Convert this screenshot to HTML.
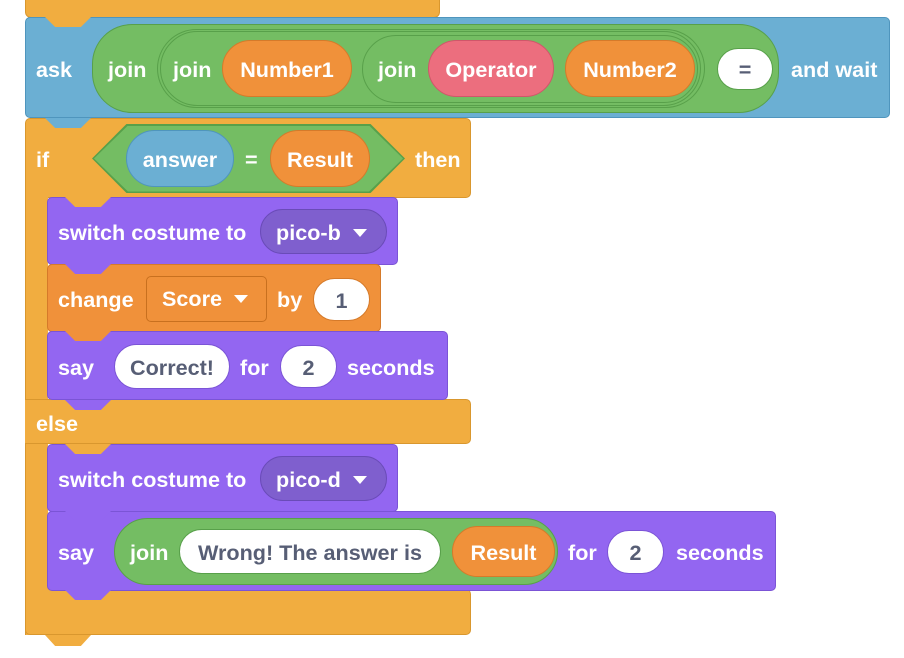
<!DOCTYPE html>
<html><head><meta charset="utf-8"><style>
body{margin:0;width:904px;height:658px;background:#fff;position:relative;overflow:hidden;font-family:"Liberation Sans",Arial,sans-serif;font-weight:bold;font-size:21.6px;color:#fff}
div{position:absolute;box-sizing:border-box}
.t{white-space:nowrap;line-height:24px}
.tab{height:10px;clip-path:polygon(0 0,100% 0,78% 100%,22% 100%)}
.pill{border-radius:40px;display:flex;align-items:center;justify-content:center;line-height:1;white-space:nowrap;padding-top:2px}
.or{background:#f0913a;border:1px solid #d57a2a}
.gr{background:#74bd63;border:1.5px solid #58a04a}
.wh{background:#fff;border:1px solid #58a04a;color:#575e75}
.pu{background:#9366f1;border:1px solid #7b54d6}
.yo{background:#f1ad40;border:1px solid #d9972e}
.dd{background:#7f5fce;border:1px solid #6a4bb8}
.ar{display:inline-block;width:0;height:0;border-left:7px solid transparent;border-right:7px solid transparent;border-top:8px solid #fff;margin-left:12px}
</style></head><body>
<div class="yo" style="left:25px;top:-10px;width:415px;height:28px;border-radius:6px"></div>
<div style="left:25px;top:17px;width:865px;height:101px;background:#6bafd3;border:1px solid #4f95bd;border-radius:5px"></div>
<div class="tab" style="left:45px;top:17px;width:46px;background:#f1ad40"></div>
<div class="t" style="left:36px;top:58px">ask</div>
<div class="pill gr" style="left:92px;top:24px;width:687px;height:89px"></div>
<div class="t" style="left:108px;top:58px">join</div>
<div class="pill gr" style="left:157px;top:29px;width:548px;height:79px"></div>
<div class="pill gr" style="left:160px;top:31px;width:541px;height:75px"></div>
<div class="t" style="left:173px;top:58px">join</div>
<div class="pill or" style="left:222px;top:40px;width:130px;height:57px">Number1</div>
<div class="pill gr" style="left:362px;top:35px;width:336px;height:68px"></div>
<div class="t" style="left:378px;top:58px">join</div>
<div class="pill" style="left:428px;top:40px;width:126px;height:57px;background:#ec6e7e;border:1px solid #d0566a">Operator</div>
<div class="pill or" style="left:565px;top:40px;width:130px;height:57px">Number2</div>
<div class="pill wh" style="left:717px;top:48px;width:56px;height:42px">=</div>
<div class="t" style="left:791px;top:58px">and wait</div>
<div class="yo" style="left:25px;top:118px;width:446px;height:80px;border-radius:5px"></div>
<div style="left:25px;top:150px;width:23px;height:485px;background:#f1ad40;border-left:1px solid #d9972e"></div>
<div class="yo" style="left:25px;top:399px;width:446px;height:45px;border-radius:0 5px 5px 0;border-left:none"></div>
<div class="yo" style="left:25px;top:589px;width:446px;height:46px;border-radius:0 5px 5px 5px;border-top:none"></div>
<div class="tab" style="left:45px;top:635px;width:46px;height:11px;background:#f1ad40"></div>
<div class="tab" style="left:45px;top:118px;width:46px;background:#6bafd3"></div>
<div class="t" style="left:36px;top:148px">if</div>
<div style="left:92px;top:124px;width:313px;height:69px;background:#58a04a;clip-path:polygon(0 50%,11% 0,89% 0,100% 50%,89% 100%,11% 100%)"></div>
<div style="left:94px;top:125.5px;width:309px;height:66px;background:#74bd63;clip-path:polygon(0 50%,11% 0,89% 0,100% 50%,89% 100%,11% 100%)"></div>
<div class="pill" style="left:126px;top:130px;width:108px;height:57px;background:#6bafd3;border:1px solid #4f95bd">answer</div>
<div class="t" style="left:245px;top:148px">=</div>
<div class="pill or" style="left:270px;top:130px;width:100px;height:57px">Result</div>
<div class="t" style="left:415px;top:148px">then</div>
<div class="pu" style="left:47px;top:197px;width:351px;height:68px;border-radius:5px"></div>
<div class="tab" style="left:65px;top:197px;width:46px;background:#f1ad40"></div>
<div class="t" style="left:58px;top:221px">switch costume to</div>
<div class="pill dd" style="left:260px;top:209px;width:127px;height:45px;justify-content:flex-start;padding-left:15px">pico-b<span class="ar"></span></div>
<div class="or" style="left:47px;top:264px;width:334px;height:68px;border-radius:5px"></div>
<div class="tab" style="left:65px;top:264px;width:46px;background:#9366f1"></div>
<div class="t" style="left:58px;top:288px">change</div>
<div style="left:146px;top:276px;width:121px;height:46px;background:#f0913a;border:1px solid #c8701f;border-radius:5px;display:flex;align-items:center;padding-left:15px;line-height:1">Score<span class="ar"></span></div>
<div class="t" style="left:277px;top:288px">by</div>
<div class="pill wh" style="left:313px;top:278px;width:57px;height:43px;border-color:#d57a2a">1</div>
<div class="pu" style="left:47px;top:331px;width:401px;height:69px;border-radius:5px"></div>
<div class="tab" style="left:65px;top:331px;width:46px;background:#f0913a"></div>
<div class="tab" style="left:65px;top:400px;width:46px;background:#9366f1"></div>
<div class="t" style="left:58px;top:356px">say</div>
<div class="pill wh" style="left:114px;top:344px;width:116px;height:45px;border-color:#7b54d6">Correct!</div>
<div class="t" style="left:240px;top:356px">for</div>
<div class="pill wh" style="left:280px;top:345px;width:57px;height:43px;border-color:#7b54d6">2</div>
<div class="t" style="left:347px;top:356px">seconds</div>
<div class="t" style="left:36px;top:412px">else</div>
<div class="pu" style="left:47px;top:444px;width:351px;height:68px;border-radius:5px"></div>
<div class="tab" style="left:65px;top:444px;width:46px;background:#f1ad40"></div>
<div class="t" style="left:58px;top:468px">switch costume to</div>
<div class="pill dd" style="left:260px;top:456px;width:127px;height:45px;justify-content:flex-start;padding-left:15px">pico-d<span class="ar"></span></div>
<div class="pu" style="left:47px;top:511px;width:729px;height:80px;border-radius:5px"></div>
<div class="tab" style="left:65px;top:511px;width:46px;background:#9366f1"></div>
<div class="tab" style="left:65px;top:590px;width:46px;background:#9366f1"></div>
<div class="t" style="left:58px;top:541px">say</div>
<div class="pill gr" style="left:114px;top:518px;width:444px;height:67px"></div>
<div class="t" style="left:130px;top:541px">join</div>
<div class="pill wh" style="left:179px;top:529px;width:262px;height:45px">Wrong! The answer is</div>
<div class="pill or" style="left:452px;top:526px;width:103px;height:51px">Result</div>
<div class="t" style="left:568px;top:541px">for</div>
<div class="pill wh" style="left:607px;top:530px;width:57px;height:44px;border-color:#7b54d6">2</div>
<div class="t" style="left:676px;top:541px">seconds</div>
</body></html>
